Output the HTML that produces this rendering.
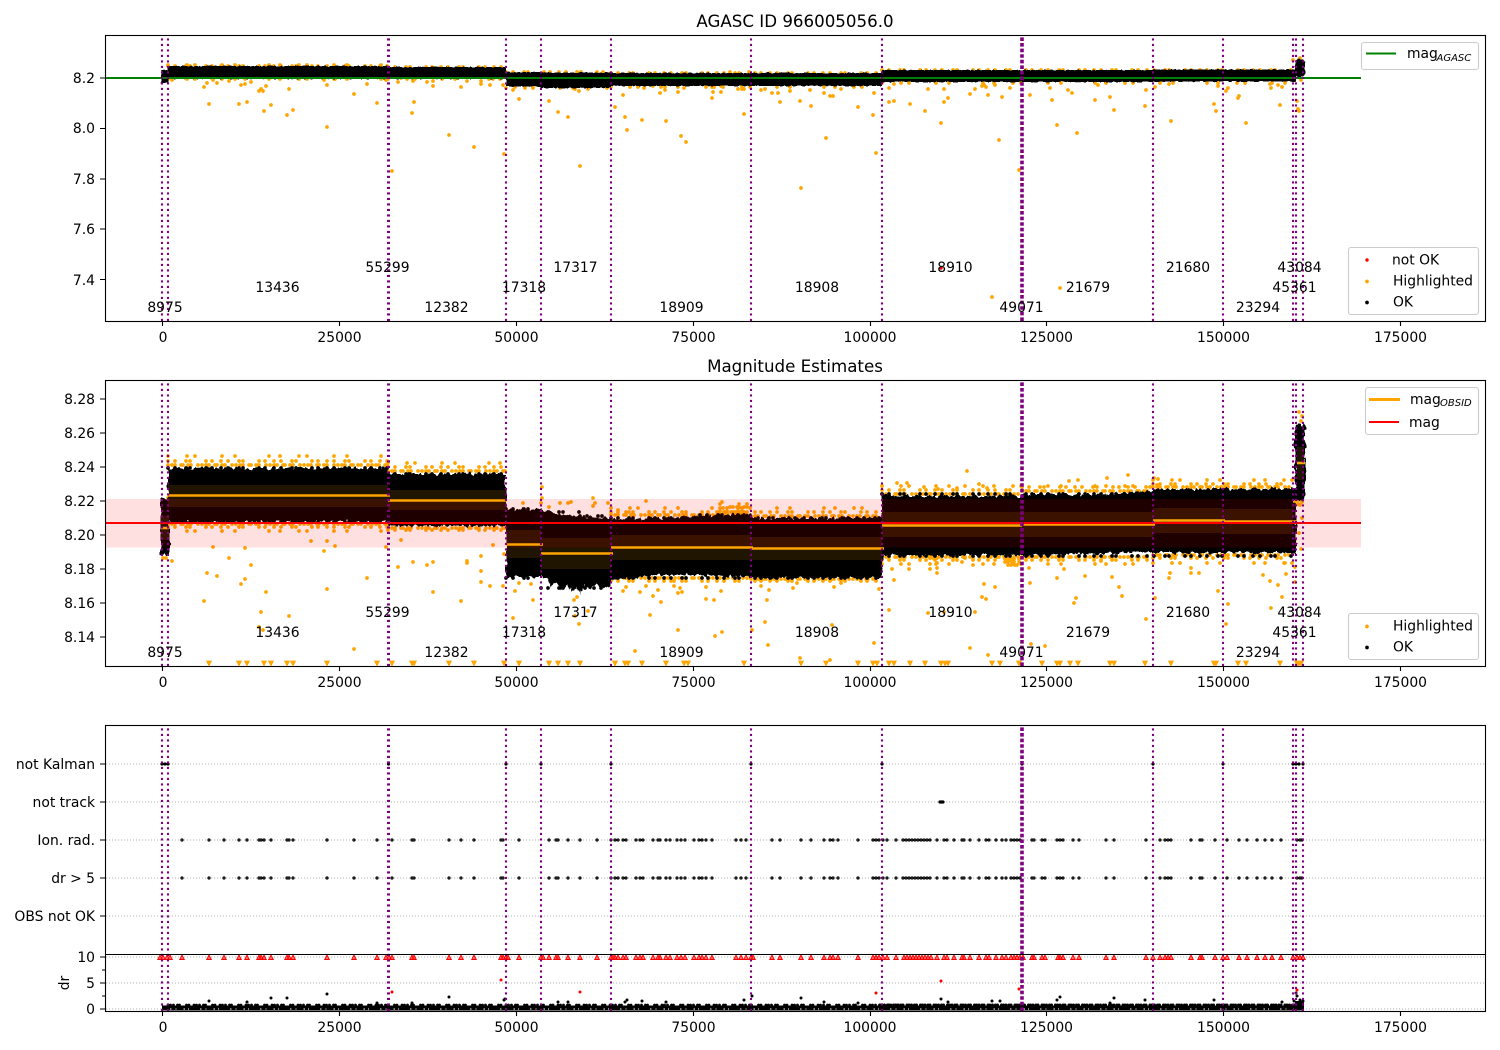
<!DOCTYPE html>
<html><head><meta charset="utf-8"><title>AGASC ID 966005056.0</title>
<style>
html,body{margin:0;padding:0;background:#fff}
svg{display:block}
text{font-family:"DejaVu Sans","Liberation Sans",sans-serif;font-size:13.89px;fill:#000}
.c{text-anchor:middle}.e{text-anchor:end}
.t{font-size:16.67px;text-anchor:middle}
.s{font-style:italic;font-size:10px}
.od{fill:none;stroke:#ffa500;stroke-width:3.7;stroke-linecap:round}
.bd{fill:none;stroke:#000;stroke-width:3.7;stroke-linecap:round}
.rd{fill:none;stroke:#f00;stroke-width:3.4;stroke-linecap:round}
.sp{fill:none;stroke:#000;stroke-width:1.1}
.tk{fill:none;stroke:#000;stroke-width:1.1}
.pu{fill:none;stroke:#800080;stroke-width:2.1;stroke-dasharray:2.1 3.4}
.pu2{fill:none;stroke:#800080;stroke-width:3.6;stroke-dasharray:3.6 2}
.gr{fill:none;stroke:#b0b0b0;stroke-width:1.1;stroke-dasharray:1.1 1.9}
.lg{fill:#fff;fill-opacity:.8;stroke:#ccc;stroke-width:1.1}
.a{stroke-dasharray:0 4 0 3 0 6 0 2 0 5 0 3 0 7 0 4}
.b{stroke-dasharray:0 7 0 11 0 4 0 16 0 6 0 9}
.d{stroke-dasharray:0 19 0 8 0 27 0 13 0 34 0 11}
.w{stroke-dasharray:0 3 0 4 0 2 0 5 0 3 0 3}
</style></head>
<body>
<svg xmlns="http://www.w3.org/2000/svg" width="1500" height="1050" viewBox="0 0 1500 1050">
<defs>
<filter id="j" filterUnits="userSpaceOnUse" x="0" y="0" width="1500" height="1050" color-interpolation-filters="sRGB">
<feTurbulence type="fractalNoise" baseFrequency="0.28 0.12" numOctaves="2" seed="4" result="n"/>
<feDisplacementMap in="SourceGraphic" in2="n" scale="7" xChannelSelector="R" yChannelSelector="G"/>
</filter>
<filter id="k" filterUnits="userSpaceOnUse" x="0" y="0" width="1500" height="1050" color-interpolation-filters="sRGB">
<feTurbulence type="fractalNoise" baseFrequency="0.3 0.2" numOctaves="2" seed="9" result="n"/>
<feDisplacementMap in="SourceGraphic" in2="n" scale="2.5" xChannelSelector="R" yChannelSelector="G"/>
</filter>
<path id="ra" d="M182 840h0M209 840h0M224 840h0M239 840h0M247 840h0M259 840h0M261 840h0M264 840h0M271 840h0M287 840h0M289 840h0M293 840h0M327 840h0M354 840h0M377 840h0M392 840h0M412 840h0M414 840h0M449 840h0M461 840h0M474 840h0M501 840h0M503 840h0M519 840h0M549 840h0M556 840h0M558 840h0M568 840h0M580 840h0M597 840h0M611 840h0M615 840h0M618 840h0M623 840h0M626 840h0M636 840h0M640 840h0M643 840h0M653 840h0M658 840h0M660 840h0M666 840h0M670 840h0M677 840h0M681 840h0M685 840h0M694 840h0M699 840h0M702 840h0M706 840h0M712 840h0M736 840h0M741 840h0M746 840h0M772 840h0M780 840h0M801 840h0M811 840h0M824 840h0M830 840h0M833 840h0M838 840h0M858 840h0M873 840h0M876 840h0M879 840h0M883 840h0M887 840h0M896 840h0M903 840h0M906 840h0M909 840h0M912 840h0M915 840h0M918 840h0M921 840h0M924 840h0M927 840h0M930 840h0M937 840h0M944 840h0M947 840h0M954 840h0M962 840h0M964 840h0M970 840h0M979 840h0M986 840h0M989 840h0M996 840h0M1002 840h0M1006 840h0M1011 840h0M1014 840h0M1017 840h0M1020 840h0M1032 840h0M1034 840h0M1042 840h0M1045 840h0M1057 840h0M1060 840h0M1063 840h0M1073 840h0M1079 840h0M1106 840h0M1114 840h0M1146 840h0M1160 840h0M1165 840h0M1168 840h0M1171 840h0M1191 840h0M1200 840h0M1202 840h0M1215 840h0M1227 840h0M1239 840h0M1247 840h0M1257 840h0M1265 840h0M1272 840h0M1281 840h0M1297 840h0M1300 840h0M1302 840h0"/>
</defs>
<rect width="1500" height="1050" fill="#fff"/>

<!-- ============ TOP PANEL ============ -->
<text class="t" x="795" y="27">AGASC ID 966005056.0</text>
<path class="od b" d="M168 66H388M388 67H506M506 72H611M611 73H882M882 70H1293M1293 60H1304"/>
<path class="od d" d="M168 79H388M388 79H506M506 88H611M611 87H882M882 83H1293M168 65H388M730 72H750"/>
<path class="od" d="M204 87h0M207 83h0M209 104h0M213 80h0M217 83h0M229 81h0M239 104h0M241 85h0M245 84h0M245 79h0M247 102h0M251 82h0M259 91h0M261 89h0M263 91h0M264 111h0M266 86h0M271 105h0M287 115h0M289 89h0M293 110h0M324 80h0M327 85h0M327 127h0M335 79h0M354 94h0M367 84h0M377 103h0M386 80h0M392 171h0M398 82h0M401 78h0M413 81h0M412 113h0M414 102h0M427 82h0M433 81h0M433 86h0M449 135h0M461 87h0M467 81h0M474 147h0M481 81h0M481 84h0M490 85h0M493 79h0M503 85h0M504 154h0M513 90h0M515 87h0M519 99h0M533 87h0M549 101h0M558 112h0M568 117h0M580 166h0M575 89h0M579 91h0M588 89h0M172 80h0M615 107h0M625 117h0M627 130h0M623 95h0M642 120h0M666 121h0M644 88h0M653 86h0M660 93h0M665 90h0M661 87h0M678 92h0M684 88h0M681 136h0M686 142h0M712 98h0M713 92h0M714 87h0M706 87h0M721 92h0M721 86h0M738 89h0M742 89h0M744 89h0M744 114h0M761 90h0M765 89h0M772 93h0M778 93h0M780 102h0M790 91h0M800 101h0M801 188h0M810 90h0M811 106h0M824 93h0M830 96h0M833 96h0M826 138h0M841 89h0M858 107h0M873 115h0M876 153h0M874 93h0M889 88h0M894 84h0M889 102h0M894 101h0M910 104h0M925 111h0M928 89h0M941 123h0M944 102h0M944 89h0M948 98h0M970 94h0M975 89h0M982 86h0M984 85h0M986 87h0M988 95h0M995 85h0M999 140h0M992 297h0M1019 170h0M1057 125h0M1060 288h0M1077 133h0M1002 97h0M1010 88h0M1030 95h0M1050 88h0M1052 100h0M1068 90h0M1072 93h0M1095 100h0M1098 85h0M1110 97h0M1114 110h0M1145 106h0M1146 90h0M1155 87h0M1171 121h0M1169 84h0M1214 104h0M1216 111h0M1218 86h0M1226 91h0M1228 88h0M1238 98h0M1239 96h0M1246 123h0M1271 88h0M1270 84h0M1278 85h0M1282 87h0M1280 105h0M1297 101h0M1298 109h0M1299 111h0M1301 80h0M1300 58h0"/>
<g filter="url(#k)" fill="#000">
<rect x="161" y="70" width="8" height="13"/>
<rect x="168" y="66" width="220" height="13"/>
<rect x="388" y="67" width="118" height="12"/>
<rect x="506" y="72" width="35" height="14.500"/>
<rect x="541" y="72.500" width="70" height="15.500"/>
<rect x="611" y="73" width="140" height="13"/>
<rect x="751" y="73" width="131" height="13"/>
<rect x="882" y="70" width="140" height="12"/>
<rect x="1022" y="70" width="131" height="12"/>
<rect x="1153" y="69.500" width="143" height="12"/>
<rect x="1295" y="59" width="10" height="18" rx="4"/>
</g>
<path d="M941 268h0" class="rd"/>
<path d="M106 78H1361" fill="none" stroke="#008000" stroke-width="2"/>
<path class="pu" d="M162 321V36M168 321V36M506 321V36M541 321V36M611 321V36M751 321V36M882 321V36M1153 321V36M1223 321V36M1293 321V36M1296 321V36M1303 321V36"/>
<path class="pu" style="stroke-width:3" d="M388.500 321V36"/>
<path class="pu2" d="M1022 321V36"/>
<rect class="sp" x="105.500" y="35.500" width="1380" height="286"/>
<path class="tk" d="M162.500 321v5M339.500 321v5M516.500 321v5M693.500 321v5M870.500 321v5M1046.500 321v5M1223.500 321v5M1400.500 321v5M105 78h-5M105 128.500h-5M105 179h-5M105 229h-5M105 279.500h-5"/>
<g>
<text class="c" x="163" y="342">0</text><text class="c" x="339.500" y="342">25000</text><text class="c" x="516.500" y="342">50000</text><text class="c" x="693.500" y="342">75000</text><text class="c" x="870" y="342">100000</text><text class="c" x="1046.500" y="342">125000</text><text class="c" x="1223.500" y="342">150000</text><text class="c" x="1400.500" y="342">175000</text>
<text class="e" x="95" y="83">8.2</text><text class="e" x="95" y="133">8.0</text><text class="e" x="95" y="184">7.8</text><text class="e" x="95" y="234">7.6</text><text class="e" x="95" y="285">7.4</text>
<text class="c" x="165" y="312">8975</text><text class="c" x="277.500" y="292">13436</text><text class="c" x="387.500" y="272">55299</text><text class="c" x="446.500" y="312">12382</text><text class="c" x="524" y="292">17318</text><text class="c" x="575.500" y="272">17317</text><text class="c" x="681.500" y="312">18909</text><text class="c" x="817" y="292">18908</text><text class="c" x="950.500" y="272">18910</text><text class="c" x="1021.500" y="312">49071</text><text class="c" x="1088" y="292">21679</text><text class="c" x="1188" y="272">21680</text><text class="c" x="1258" y="312">23294</text><text class="c" x="1294.500" y="292">45361</text><text class="c" x="1299.500" y="272">43084</text>
</g>
<rect class="lg" x="1361.500" y="42.500" width="117" height="27" rx="2.500"/>
<path d="M1366 53.500h30" fill="none" stroke="#008000" stroke-width="2"/>
<text x="1407" y="58">mag</text><text class="s" x="1436.500" y="61">AGASC</text>
<rect class="lg" x="1348.500" y="247.500" width="130" height="67" rx="2.500"/>
<path class="rd" d="M1367 260h0"/><path class="od" d="M1367 281.500h0"/><path class="bd" d="M1367 302.500h0"/>
<text x="1392" y="264.500">not OK</text><text x="1393" y="285.500">Highlighted</text><text x="1393" y="306.500">OK</text>

<!-- ============ MIDDLE PANEL ============ -->
<text class="t" x="795" y="372">Magnitude Estimates</text>
<path class="od a" d="M168 465H388M388 471H506M611 515H751M751 516H882M882 494H1022M1022 491H1153M1153 487H1293M168 524H388M388 528H506M611 578H751M751 579H882M882 557H1022M1022 557H1153M1153 555H1293"/>
<path class="od b" d="M168 461H388M388 467H506M611 512H882M882 490H1022M1022 487H1153M1153 484H1293M168 527H388M388 530H506M611 581H882M882 560H1153M1153 558H1293M720 508H752M720 511H752M720 514H752"/>
<path class="od d" d="M168 456H388M388 463H506M611 508H882M882 486H1153M1153 480H1293M168 531H388M882 564H1153M1153 563H1293M541 503H611M720 504H752"/>
<path class="od w" d="M724 512H750M730 507H750M1005 559H1022M1005 562H1022M1008 565H1020M930 558H938"/>
<path class="od" d="M213 547h0M229 558h0M207 573h0M217 576h0M245 548h0M251 565h0M245 579h0M241 584h0M204 601h0M266 592h0M261 612h0M259 627h0M263 630h0M289 616h0M311 541h0M327 541h0M324 551h0M335 546h0M327 589h0M367 578h0M354 649h0M386 547h0M172 561h0M163 558h0M166 558h0M168 498h0M398 567h0M401 540h0M413 562h0M427 565h0M433 562h0M433 592h0M461 601h0M467 561h0M467 563h0M481 556h0M481 571h0M481 582h0M490 586h0M493 545h0M503 586h0M504 554h0M515 591h0M513 618h0M533 600h0M519 583h0M531 584h0M574 600h0M575 616h0M579 624h0M588 611h0M577 597h0M542 487h0M523 503h0M571 502h0M593 498h0M542 498h0M549 507h0M593 506h0M646 501h0M618 510h0M626 512h0M722 502h0M623 591h0M626 587h0M646 586h0M658 590h0M653 596h0M661 602h0M674 581h0M674 586h0M680 588h0M682 592h0M678 593h0M706 587h0M706 599h0M714 600h0M721 591h0M761 586h0M769 590h0M767 600h0M793 588h0M797 583h0M834 587h0M841 583h0M879 589h0M635 651h0M650 615h0M678 630h0M715 636h0M722 632h0M640 592h0M752 630h0M765 622h0M768 645h0M800 658h0M830 660h0M832 625h0M897 483h0M907 483h0M924 487h0M938 489h0M957 488h0M965 486h0M979 484h0M987 488h0M967 471h0M937 558h0M937 563h0M937 568h0M937 573h0M930 558h0M930 564h0M930 569h0M904 557h0M909 569h0M892 569h0M894 580h0M889 610h0M874 643h0M928 613h0M944 612h0M975 612h0M970 648h0M988 655h0M982 597h0M986 599h0M984 584h0M995 587h0M973 558h0M973 565h0M962 562h0M965 558h0M1030 583h0M1029 568h0M1064 569h0M1057 578h0M1085 576h0M1112 577h0M1119 587h0M1122 596h0M1146 619h0M1155 598h0M1101 561h0M1085 557h0M1074 603h0M1076 598h0M1031 644h0M1045 646h0M1107 478h0M1128 475h0M1078 480h0M1069 481h0M1170 573h0M1169 578h0M1191 568h0M1191 573h0M1199 573h0M1218 591h0M1228 604h0M1226 624h0M1271 608h0M1263 575h0M1270 581h0M1278 585h0M1282 597h0M1286 574h0M1285 563h0M1299 412h0M1302 416h0M1301 421h0M1300 505h0M1302 518h0M1299 533h0M1301 549h0M1295 567h0M1298 504h0M1302 502h0M1295 582h0M1157 485h0M1154 478h0M1158 479h0"/>
<path fill="#ffa500" stroke="#ffa500" stroke-width=".7" d="M206.500 661h5l-2.500 5zM236.500 661h5l-2.500 5zM244.500 661h5l-2.500 5zM261.500 661h5l-2.500 5zM268.500 661h5l-2.500 5zM284.500 661h5l-2.500 5zM290.500 661h5l-2.500 5zM324.500 661h5l-2.500 5zM374.500 661h5l-2.500 5zM389.500 661h5l-2.500 5zM409.500 661h5l-2.500 5zM411.500 661h5l-2.500 5zM446.500 661h5l-2.500 5zM471.500 661h5l-2.500 5zM501.500 661h5l-2.500 5zM516.500 661h5l-2.500 5zM546.500 661h5l-2.500 5zM555.500 661h5l-2.500 5zM565.500 661h5l-2.500 5zM577.500 661h5l-2.500 5zM612.500 661h5l-2.500 5zM622.500 661h5l-2.500 5zM625.500 661h5l-2.500 5zM639.500 661h5l-2.500 5zM663.500 661h5l-2.500 5zM681.500 661h5l-2.500 5zM685.500 661h5l-2.500 5zM741.500 661h5l-2.500 5zM798.500 661h5l-2.500 5zM823.500 661h5l-2.500 5zM855.500 661h5l-2.500 5zM870.500 661h5l-2.500 5zM874.500 661h5l-2.500 5zM886.500 661h5l-2.500 5zM891.500 661h5l-2.500 5zM907.500 661h5l-2.500 5zM922.500 661h5l-2.500 5zM938.500 661h5l-2.500 5zM942.500 661h5l-2.500 5zM945.500 661h5l-2.500 5zM989.500 661h5l-2.500 5zM997.500 661h5l-2.500 5zM1016.500 661h5l-2.500 5zM1039.500 661h5l-2.500 5zM1054.500 661h5l-2.500 5zM1057.500 661h5l-2.500 5zM1067.500 661h5l-2.500 5zM1075.500 661h5l-2.500 5zM1107.500 661h5l-2.500 5zM1111.500 661h5l-2.500 5zM1142.500 661h5l-2.500 5zM1168.500 661h5l-2.500 5zM1211.500 661h5l-2.500 5zM1213.500 661h5l-2.500 5zM1235.500 661h5l-2.500 5zM1243.500 661h5l-2.500 5zM1277.500 661h5l-2.500 5zM1294.500 661h5l-2.500 5zM1296.500 661h5l-2.500 5zM1298.500 661h5l-2.500 5z"/>
<g filter="url(#j)" fill="#000">
<rect x="161" y="498" width="8" height="57"/>
<rect x="168" y="468" width="220" height="54"/>
<rect x="388" y="474" width="118" height="52"/>
<rect x="506" y="509" width="35" height="68"/>
<path d="M541 511L575 516L611 518V585L605 586L602 590L596 584L590 589L584 584L581 594L577 588L572 592L567 585L562 590L556 582L552 586L546 579L541 577Z"/>
<path d="M611 519L660 518L700 516L751 514V577L700 575L660 575L611 579Z"/>
<rect x="751" y="518" width="131" height="60"/>
<rect x="882" y="496" width="140" height="59"/>
<path d="M1022 494H1100L1153 491V553H1100L1022 556Z"/>
<rect x="1153" y="489" width="143" height="64"/>
<rect x="1295" y="424" width="10" height="78" rx="4"/>
</g>
<path class="bd b" d="M168 468H388M388 474H506M506 509H541M541 512H580M580 516H611M611 518H700M700 515H751M751 518H882M882 494H1293M882 556H1293M168 522H506M506 578H541M541 588H611M611 578H882"/>
<g fill="#ffa500" fill-opacity=".125">
<rect x="161" y="516" width="8" height="24"/>
<rect x="168" y="485" width="220" height="22"/>
<rect x="388" y="490" width="118" height="20"/>
<rect x="506" y="530" width="35" height="28"/>
<rect x="541" y="538" width="70" height="31"/>
<rect x="611" y="535" width="140" height="25"/>
<rect x="751" y="537" width="131" height="23"/>
<rect x="882" y="512" width="140" height="25"/>
<rect x="1022" y="512" width="131" height="25"/>
<rect x="1153" y="508" width="70" height="25"/>
<rect x="1223" y="509" width="70" height="25"/>
<rect x="1297" y="447" width="7" height="33"/>
</g>
<rect x="106" y="499" width="1255" height="48.500" fill="#f00" fill-opacity=".12"/>
<path fill="none" stroke="#ffa500" stroke-width="2.500" d="M161 528h8M168 495.500H390M388 500.500H507M506 544.500H543M541 553.500H613M611 547.500H753M751 548.500H884M882 525.500H1022M1022 524.500H1155M1153 520.500H1225M1223 521.500H1297M1293 501.500h6M1297 463h8"/>
<path d="M106 523H1361" fill="none" stroke="#f00" stroke-width="2"/>
<path class="pu" d="M162 666V381M168 666V381M506 666V381M541 666V381M611 666V381M751 666V381M882 666V381M1153 666V381M1223 666V381M1293 666V381M1296 666V381M1303 666V381"/>
<path class="pu" style="stroke-width:3" d="M388.500 666V381"/>
<path class="pu2" d="M1022 666V381"/>
<rect class="sp" x="105.500" y="380.500" width="1380" height="286"/>
<path class="tk" d="M162.500 666v5M339.500 666v5M516.500 666v5M693.500 666v5M870.500 666v5M1046.500 666v5M1223.500 666v5M1400.500 666v5M105 399h-5M105 433h-5M105 467h-5M105 501h-5M105 535h-5M105 569h-5M105 603h-5M105 637h-5"/>
<g>
<text class="c" x="163" y="687">0</text><text class="c" x="339.500" y="687">25000</text><text class="c" x="516.500" y="687">50000</text><text class="c" x="693.500" y="687">75000</text><text class="c" x="870" y="687">100000</text><text class="c" x="1046.500" y="687">125000</text><text class="c" x="1223.500" y="687">150000</text><text class="c" x="1400.500" y="687">175000</text>
<text class="e" x="95" y="404">8.28</text><text class="e" x="95" y="438">8.26</text><text class="e" x="95" y="472">8.24</text><text class="e" x="95" y="506">8.22</text><text class="e" x="95" y="540">8.20</text><text class="e" x="95" y="574">8.18</text><text class="e" x="95" y="608">8.16</text><text class="e" x="95" y="642">8.14</text>
<text class="c" x="165" y="657">8975</text><text class="c" x="277.500" y="637">13436</text><text class="c" x="387.500" y="617">55299</text><text class="c" x="446.500" y="657">12382</text><text class="c" x="524" y="637">17318</text><text class="c" x="575.500" y="617">17317</text><text class="c" x="681.500" y="657">18909</text><text class="c" x="817" y="637">18908</text><text class="c" x="950.500" y="617">18910</text><text class="c" x="1021.500" y="657">49071</text><text class="c" x="1088" y="637">21679</text><text class="c" x="1188" y="617">21680</text><text class="c" x="1258" y="657">23294</text><text class="c" x="1294.500" y="637">45361</text><text class="c" x="1299.500" y="617">43084</text>
</g>
<rect class="lg" x="1365.500" y="387.500" width="113" height="47" rx="2.500"/>
<path d="M1369 399.500h31" fill="none" stroke="#ffa500" stroke-width="3"/>
<path d="M1369 422h30" fill="none" stroke="#f00" stroke-width="2"/>
<text x="1410" y="404">mag</text><text class="s" x="1440" y="406">OBSID</text><text x="1409" y="427">mag</text>
<rect class="lg" x="1348.500" y="613.500" width="130" height="46" rx="2.500"/>
<path class="od" d="M1367 626.500h0"/><path class="bd" d="M1367 647.500h0"/>
<text x="1393" y="630.500">Highlighted</text><text x="1393" y="651.500">OK</text>

<!-- ============ BOTTOM PANEL ============ -->
<path class="gr" d="M106 764H1485M106 802H1485M106 840H1485M106 878H1485M106 916H1485M106 957H1485M106 983H1485M106 1009H1485"/>
<g fill="none" stroke="#000" stroke-width="3.200" stroke-linecap="round">
<use href="#ra"/><use href="#ra" transform="translate(0 38)"/>
<path d="M162 764h0M165 764h0M168 764h0M388.500 764h0M506 764h0M541 764h0M611 764h0M751 764h0M882 764h0M1022 764h0M1153 764h0M1223 764h0M1293 764h0M1296 764h0M1299 764h0M1303 764h0M940 802h3"/>
</g>
<g fill="none" stroke="#999" stroke-width="1" stroke-linecap="round">
<use href="#ra"/><use href="#ra" transform="translate(0 38)"/>
</g>
<path fill="#ff7070" stroke="#f00" stroke-width=".9" d="M160 955l2.300 4.500h-4.600zM163 955l2.300 4.500h-4.600zM167 955l2.300 4.500h-4.600zM170 955l2.300 4.500h-4.600zM182 955l2.300 4.500h-4.600zM209 955l2.300 4.500h-4.600zM224 955l2.300 4.500h-4.600zM239 955l2.300 4.500h-4.600zM247 955l2.300 4.500h-4.600zM259 955l2.300 4.500h-4.600zM261 955l2.300 4.500h-4.600zM264 955l2.300 4.500h-4.600zM271 955l2.300 4.500h-4.600zM287 955l2.300 4.500h-4.600zM289 955l2.300 4.500h-4.600zM293 955l2.300 4.500h-4.600zM327 955l2.300 4.500h-4.600zM354 955l2.300 4.500h-4.600zM377 955l2.300 4.500h-4.600zM386 955l2.300 4.500h-4.600zM389 955l2.300 4.500h-4.600zM392 955l2.300 4.500h-4.600zM412 955l2.300 4.500h-4.600zM414 955l2.300 4.500h-4.600zM449 955l2.300 4.500h-4.600zM461 955l2.300 4.500h-4.600zM474 955l2.300 4.500h-4.600zM501 955l2.300 4.500h-4.600zM503 955l2.300 4.500h-4.600zM506 955l2.300 4.500h-4.600zM508 955l2.300 4.500h-4.600zM519 955l2.300 4.500h-4.600zM541 955l2.300 4.500h-4.600zM543 955l2.300 4.500h-4.600zM549 955l2.300 4.500h-4.600zM556 955l2.300 4.500h-4.600zM558 955l2.300 4.500h-4.600zM568 955l2.300 4.500h-4.600zM580 955l2.300 4.500h-4.600zM597 955l2.300 4.500h-4.600zM611 955l2.300 4.500h-4.600zM613 955l2.300 4.500h-4.600zM615 955l2.300 4.500h-4.600zM618 955l2.300 4.500h-4.600zM623 955l2.300 4.500h-4.600zM626 955l2.300 4.500h-4.600zM636 955l2.300 4.500h-4.600zM640 955l2.300 4.500h-4.600zM643 955l2.300 4.500h-4.600zM653 955l2.300 4.500h-4.600zM658 955l2.300 4.500h-4.600zM660 955l2.300 4.500h-4.600zM666 955l2.300 4.500h-4.600zM670 955l2.300 4.500h-4.600zM677 955l2.300 4.500h-4.600zM681 955l2.300 4.500h-4.600zM685 955l2.300 4.500h-4.600zM694 955l2.300 4.500h-4.600zM699 955l2.300 4.500h-4.600zM702 955l2.300 4.500h-4.600zM706 955l2.300 4.500h-4.600zM712 955l2.300 4.500h-4.600zM736 955l2.300 4.500h-4.600zM741 955l2.300 4.500h-4.600zM746 955l2.300 4.500h-4.600zM751 955l2.300 4.500h-4.600zM753 955l2.300 4.500h-4.600zM772 955l2.300 4.500h-4.600zM780 955l2.300 4.500h-4.600zM801 955l2.300 4.500h-4.600zM811 955l2.300 4.500h-4.600zM824 955l2.300 4.500h-4.600zM830 955l2.300 4.500h-4.600zM833 955l2.300 4.500h-4.600zM838 955l2.300 4.500h-4.600zM858 955l2.300 4.500h-4.600zM873 955l2.300 4.500h-4.600zM876 955l2.300 4.500h-4.600zM879 955l2.300 4.500h-4.600zM883 955l2.300 4.500h-4.600zM887 955l2.300 4.500h-4.600zM896 955l2.300 4.500h-4.600zM904 955l2.300 4.500h-4.600zM907 955l2.300 4.500h-4.600zM910 955l2.300 4.500h-4.600zM913 955l2.300 4.500h-4.600zM916 955l2.300 4.500h-4.600zM919 955l2.300 4.500h-4.600zM922 955l2.300 4.500h-4.600zM925 955l2.300 4.500h-4.600zM928 955l2.300 4.500h-4.600zM931 955l2.300 4.500h-4.600zM937 955l2.300 4.500h-4.600zM944 955l2.300 4.500h-4.600zM947 955l2.300 4.500h-4.600zM954 955l2.300 4.500h-4.600zM962 955l2.300 4.500h-4.600zM964 955l2.300 4.500h-4.600zM970 955l2.300 4.500h-4.600zM979 955l2.300 4.500h-4.600zM986 955l2.300 4.500h-4.600zM989 955l2.300 4.500h-4.600zM996 955l2.300 4.500h-4.600zM1002 955l2.300 4.500h-4.600zM1006 955l2.300 4.500h-4.600zM1011 955l2.300 4.500h-4.600zM1014 955l2.300 4.500h-4.600zM1017 955l2.300 4.500h-4.600zM1020 955l2.300 4.500h-4.600zM1023 955l2.300 4.500h-4.600zM1032 955l2.300 4.500h-4.600zM1034 955l2.300 4.500h-4.600zM1042 955l2.300 4.500h-4.600zM1045 955l2.300 4.500h-4.600zM1058 955l2.300 4.500h-4.600zM1060 955l2.300 4.500h-4.600zM1063 955l2.300 4.500h-4.600zM1073 955l2.300 4.500h-4.600zM1079 955l2.300 4.500h-4.600zM1106 955l2.300 4.500h-4.600zM1114 955l2.300 4.500h-4.600zM1146 955l2.300 4.500h-4.600zM1153 955l2.300 4.500h-4.600zM1160 955l2.300 4.500h-4.600zM1165 955l2.300 4.500h-4.600zM1168 955l2.300 4.500h-4.600zM1171 955l2.300 4.500h-4.600zM1191 955l2.300 4.500h-4.600zM1200 955l2.300 4.500h-4.600zM1202 955l2.300 4.500h-4.600zM1215 955l2.300 4.500h-4.600zM1223 955l2.300 4.500h-4.600zM1227 955l2.300 4.500h-4.600zM1239 955l2.300 4.500h-4.600zM1247 955l2.300 4.500h-4.600zM1257 955l2.300 4.500h-4.600zM1265 955l2.300 4.500h-4.600zM1272 955l2.300 4.500h-4.600zM1281 955l2.300 4.500h-4.600zM1293 955l2.300 4.500h-4.600zM1297 955l2.300 4.500h-4.600zM1300 955l2.300 4.500h-4.600zM1303 955l2.300 4.500h-4.600z"/>
<path class="rd" style="stroke-width:3" d="M392 992h0M501 980h0M580 992h0M876 993h0M941 981h0M1019 989h0M1297 990h0"/>
<rect x="162" y="1005.500" width="1134" height="5" fill="#000"/>
<rect x="1295" y="1001" width="9" height="9.500" fill="#000"/>
<path fill="none" stroke="#fff" stroke-width="1" stroke-dasharray="1.500 4 1 7 1.500 3 1 11" d="M170 1009H1294"/>
<path fill="none" stroke="#000" stroke-width="2.800" stroke-linecap="round" stroke-dasharray="0 2.500 0 3 0 4 0 2 0 7 0 2.500 0 5" d="M168 1005H900"/>
<path fill="none" stroke="#000" stroke-width="3" stroke-linecap="round" stroke-dasharray="0 2 0 2.500 0 3 0 2 0 4" d="M880 1005H1296"/>
<path fill="none" stroke="#000" stroke-width="3" stroke-linecap="round" d="M209 1001h0M247 1002h0M271 998h0M287 998h0M327 994h0M449 997h0M377 1003h0M412 1003h0M504 1000h0M505 999h0M558 1002h0M568 1002h0M625 1002h0M627 1000h0M642 1001h0M666 1002h0M744 1000h0M752 996h0M801 998h0M824 1002h0M858 1003h0M941 999h0M948 1002h0M992 1001h0M1000 1001h0M1057 1000h0M1060 997h0M1114 998h0M1110 1003h0M1145 1000h0M1214 1000h0M1282 1002h0M1297 996h0M1296 993h0M1300 1000h0M1303 1001h0M1294 1001h0"/>
<path class="pu" d="M162 1011V726M168 1011V726M506 1011V726M541 1011V726M611 1011V726M751 1011V726M882 1011V726M1153 1011V726M1223 1011V726M1293 1011V726M1296 1011V726M1303 1011V726"/>
<path class="pu" style="stroke-width:3" d="M388.500 1011V726"/>
<path class="pu2" d="M1022 1011V726"/>
<path d="M105 954.500H1485" fill="none" stroke="#000" stroke-width="1.100"/>
<rect class="sp" x="105.500" y="725.500" width="1380" height="286"/>
<path class="tk" d="M162.500 1011v5M339.500 1011v5M516.500 1011v5M693.500 1011v5M870.500 1011v5M1046.500 1011v5M1223.500 1011v5M1400.500 1011v5M105 764h-5M105 802h-5M105 840h-5M105 878h-5M105 916h-5M105 957h-5M105 983h-5M105 1009h-5M105 970h-3M105 996h-3"/>
<g>
<text class="c" x="163" y="1032">0</text><text class="c" x="339.500" y="1032">25000</text><text class="c" x="516.500" y="1032">50000</text><text class="c" x="693.500" y="1032">75000</text><text class="c" x="870" y="1032">100000</text><text class="c" x="1046.500" y="1032">125000</text><text class="c" x="1223.500" y="1032">150000</text><text class="c" x="1400.500" y="1032">175000</text>
<text class="e" x="95" y="769">not Kalman</text><text class="e" x="95" y="807">not track</text><text class="e" x="95" y="845">Ion. rad.</text><text class="e" x="95" y="883">dr &gt; 5</text><text class="e" x="95" y="921">OBS not OK</text>
<text class="e" x="95" y="962">10</text><text class="e" x="95" y="988">5</text><text class="e" x="95" y="1014">0</text>
<text class="c" transform="translate(69 983) rotate(-90)" x="0" y="0">dr</text>
</g>
</svg>
</body></html>
